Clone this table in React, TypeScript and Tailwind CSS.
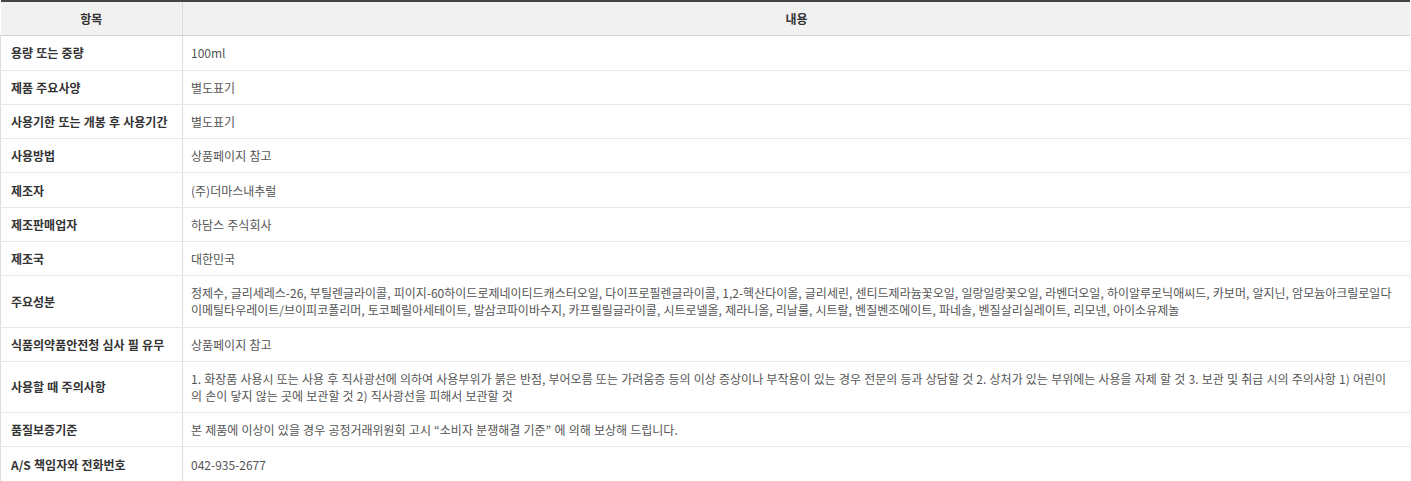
const rows: [string, string][] = [
  ["용량 또는 중량", "100ml"],
  ["제품 주요사양", "별도표기"],
  ["사용기한 또는 개봉 후 사용기간", "별도표기"],
  ["사용방법", "상품페이지 참고"],
  ["제조자", "(주)더마스내추럴"],
  ["제조판매업자", "하담스 주식회사"],
  ["제조국", "대한민국"],
  [
    "주요성분",
    "정제수, 글리세레스-26, 부틸렌글라이콜, 피이지-60하이드로제네이티드캐스터오일, 다이프로필렌글라이콜, 1,2-헥산다이올, 글리세린, 센티드제라늄꽃오일, 일랑일랑꽃오일, 라벤더오일, 하이알루로닉애씨드, 카보머, 알지닌, 암모늄아크릴로일다이메틸타우레이트/브이피코폴리머, 토코페릴아세테이트, 발삼코파이바수지, 카프릴릴글라이콜, 시트로넬올, 제라니올, 리날룰, 시트랄, 벤질벤조에이트, 파네솔, 벤질살리실레이트, 리모넨, 아이소유제놀",
  ],
  ["식품의약품안전청 심사 필 유무", "상품페이지 참고"],
  [
    "사용할 때 주의사항",
    "1. 화장품 사용시 또는 사용 후 직사광선에 의하여 사용부위가 붉은 반점, 부어오름 또는 가려움증 등의 이상 증상이나 부작용이 있는 경우 전문의 등과 상담할 것 2. 상처가 있는 부위에는 사용을 자제 할 것 3. 보관 및 취급 시의 주의사항 1) 어린이의 손이 닿지 않는 곳에 보관할 것 2) 직사광선을 피해서 보관할 것",
  ],
  ["품질보증기준", "본 제품에 이상이 있을 경우 공정거래위원회 고시 “소비자 분쟁해결 기준” 에 의해 보상해 드립니다."],
  ["A/S 책임자와 전화번호", "042-935-2677"],
];

export default function App() {
  return (
    <div className="bg-white font-['Noto_Sans_CJK_KR','Noto_Sans',sans-serif] text-[12px] leading-[17px] [word-spacing:0.5px]">
      <table className="w-[1410px] table-fixed border-collapse border-t-2 border-t-[#444444]">
        <colgroup>
          <col className="w-[182px]" />
          <col />
        </colgroup>
        <thead>
          <tr className="bg-[#f1f1f1]">
            <th className="border-b border-b-[#d4d4d4] border-r border-r-[#dddddd] px-[10px] py-[8.15px] text-center font-bold text-[#333333]">
              항목
            </th>
            <th className="border-b border-b-[#d4d4d4] px-[10px] py-[8.15px] text-center font-bold text-[#333333]">
              내용
            </th>
          </tr>
        </thead>
        <tbody>
          {rows.map(([label, value], i) => {
            const line = i === rows.length - 1 ? "border-b border-b-[#d4d4d4]" : "border-b border-b-[#e8e8e8]";
            return (
              <tr key={i}>
                <th
                  className={
                    "border-l border-l-[#dddddd] border-r border-r-[#dddddd] px-[10px] py-[8.15px] text-left font-bold text-[#333333] " +
                    line
                  }
                >
                  {label}
                </th>
                <td className={"pl-2 pr-[13px] py-[8.15px] text-left text-[#555555] " + line}>{value}</td>
              </tr>
            );
          })}
        </tbody>
      </table>
    </div>
  );
}
